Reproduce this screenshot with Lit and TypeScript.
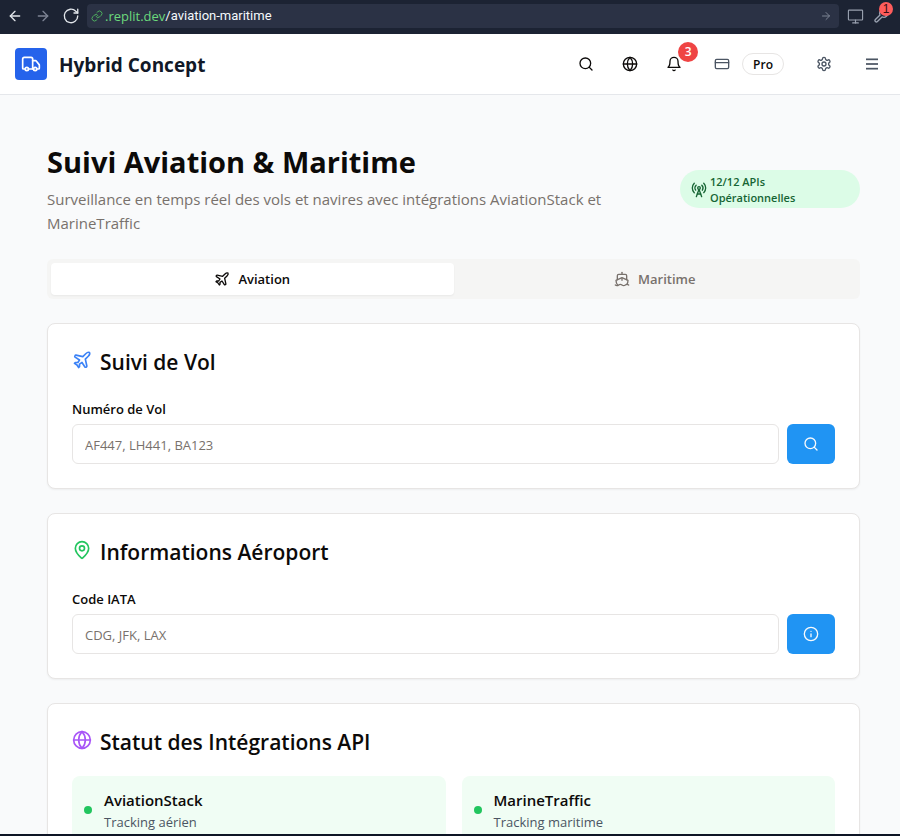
import { LitElement, html, css, svg, type SVGTemplateResult } from "lit";
import { customElement, property, state } from "lit/decorators.js";
import { classMap } from "lit/directives/class-map.js";

const ICONS: Record<string, SVGTemplateResult> = {
  back: svg`<path d="m12 19-7-7 7-7"/><path d="M19 12H5"/>`,
  forward: svg`<path d="M5 12h14"/><path d="m12 5 7 7-7 7"/>`,
  reload: svg`<path d="M21 12a9 9 0 1 1-2.6-6.4L21 8"/><path d="M21 3v5h-5"/>`,
  link: svg`<path d="M10 13a5 5 0 0 0 7.54.54l3-3a5 5 0 0 0-7.07-7.07l-1.72 1.71"/><path d="M14 11a5 5 0 0 0-7.54-.54l-3 3a5 5 0 0 0 7.07 7.07l1.71-1.71"/>`,
  monitor: svg`<rect width="20" height="14" x="2" y="3" rx="1"/><path d="M8 21h8"/><path d="M12 17v4"/>`,
  wrench: svg`<path d="M14.7 6.3a1 1 0 0 0 0 1.4l1.6 1.6a1 1 0 0 0 1.4 0l3.77-3.77a6 6 0 0 1-7.94 7.94l-6.91 6.91a2.12 2.12 0 0 1-3-3l6.91-6.91a6 6 0 0 1 7.94-7.94l-3.76 3.76z"/>`,
  truck: svg`<path d="M14 18V6a2 2 0 0 0-2-2H4a2 2 0 0 0-2 2v11a1 1 0 0 0 1 1h2"/><path d="M15 18H9"/><path d="M19 18h2a1 1 0 0 0 1-1v-3.65a1 1 0 0 0-.22-.624l-3.48-4.35A1 1 0 0 0 17.52 8H14"/><circle cx="17" cy="18" r="2"/><circle cx="7" cy="18" r="2"/>`,
  search: svg`<circle cx="11" cy="11" r="8"/><path d="m21 21-4.3-4.3"/>`,
  globe: svg`<circle cx="12" cy="12" r="10"/><path d="M12 2a14.5 14.5 0 0 0 0 20 14.5 14.5 0 0 0 0-20"/><path d="M2 12h20"/>`,
  bell: svg`<path d="M6 8a6 6 0 0 1 12 0c0 7 3 9 3 9H3s3-2 3-9"/><path d="M10.3 21a1.94 1.94 0 0 0 3.4 0"/>`,
  card: svg`<rect width="20" height="14" x="2" y="5" rx="2"/><path d="M2 10h20"/>`,
  settings: svg`<path d="M12.22 2h-.44a2 2 0 0 0-2 2v.18a2 2 0 0 1-1 1.73l-.43.25a2 2 0 0 1-2 0l-.15-.08a2 2 0 0 0-2.73.73l-.22.38a2 2 0 0 0 .73 2.73l.15.1a2 2 0 0 1 1 1.72v.51a2 2 0 0 1-1 1.74l-.15.09a2 2 0 0 0-.73 2.73l.22.38a2 2 0 0 0 2.73.73l.15-.08a2 2 0 0 1 2 0l.43.25a2 2 0 0 1 1 1.73V20a2 2 0 0 0 2 2h.44a2 2 0 0 0 2-2v-.18a2 2 0 0 1 1-1.73l.43-.25a2 2 0 0 1 2 0l.15.08a2 2 0 0 0 2.73-.73l.22-.39a2 2 0 0 0-.73-2.73l-.15-.08a2 2 0 0 1-1-1.74v-.5a2 2 0 0 1 1-1.74l.15-.09a2 2 0 0 0 .73-2.73l-.22-.38a2 2 0 0 0-2.73-.73l-.15.08a2 2 0 0 1-2 0l-.43-.25a2 2 0 0 1-1-1.73V4a2 2 0 0 0-2-2z"/><circle cx="12" cy="12" r="3"/>`,
  menu: svg`<g stroke-width="2.6" stroke-linecap="butt"><path d="M3 5h18"/><path d="M3 12h18"/><path d="M3 19h18"/></g>`,
  tower: svg`<path d="M4.9 16.1C1 12.2 1 5.8 4.9 1.9"/><path d="M7.8 4.7a6.14 6.14 0 0 0-.8 7.5"/><circle cx="12" cy="9" r="2"/><path d="M16.2 4.8c2 2 2.26 5.11.8 7.47"/><path d="M19.1 1.9a9.96 9.96 0 0 1 0 14.1"/><path d="M9.5 18h5"/><path d="m8 22 4-11 4 11"/>`,
  plane: svg`<path d="M17.8 19.2 16 11l3.5-3.5C21 6 21.5 4 21 3c-1-.5-3 0-4.5 1.5L13 8 4.8 6.2c-.5-.1-.9.1-1.1.5l-.3.5c-.2.5-.1 1 .3 1.3L9 12l-2 3H4l-1 1 3 2 2 3 1-1v-3l3-2 3.5 5.3c.3.4.8.5 1.3.3l.5-.2c.4-.3.6-.7.5-1.2z"/>`,
  ship: svg`<path d="M12 10.189V14"/><path d="M12 2v3"/><path d="M19 13V7a2 2 0 0 0-2-2H7a2 2 0 0 0-2 2v6"/><path d="M19.38 20A11.6 11.6 0 0 0 21 14l-8.188-3.639a2 2 0 0 0-1.624 0L3 14a11.6 11.6 0 0 0 2.81 7.76"/><path d="M2 21c.6.5 1.2 1 2.5 1 2.5 0 2.5-2 5-2 1.3 0 1.9.5 2.5 1s1.2 1 2.5 1c2.5 0 2.5-2 5-2 1.3 0 1.9.5 2.5 1"/>`,
  pin: svg`<path d="M20 10c0 4.993-5.539 10.193-7.399 11.799a1 1 0 0 1-1.202 0C9.539 20.193 4 14.993 4 10a8 8 0 0 1 16 0"/><circle cx="12" cy="10" r="3"/>`,
  info: svg`<circle cx="12" cy="12" r="10"/><path d="M12 16v-4"/><path d="M12 8h.01"/>`,
};

@customElement("ui-icon")
class UiIcon extends LitElement {
  @property() name = "";
  @property({ type: Number }) size = 16;
  @property({ type: Number }) weight = 2;

  static styles = css`
    :host { display: block; flex: none; }
    .glyph { display: block; }
  `;

  render() {
    return html`<svg class="glyph" width=${this.size} height=${this.size} viewBox="0 0 24 24"
      fill="none" stroke="currentColor" stroke-width=${this.weight}
      stroke-linecap="round" stroke-linejoin="round" aria-hidden="true">${ICONS[this.name]}</svg>`;
  }
}

@customElement("browser-bar")
class BrowserBar extends LitElement {
  static styles = css`
    :host {
      display: flex; align-items: center; box-sizing: border-box; height: 34px;
      padding: 0 6px 2px 1px; background: #1c2333; color: #f5f9fc;
      font-family: Roboto, "Open Sans", sans-serif; font-size: 13px;
    }
    .tool {
      position: relative; display: grid; place-items: center; flex: none;
      width: 28px; height: 28px; padding: 0; border: 0; background: none; color: #e1e5ea;
    }
    .tool.narrow { width: 26px; color: #99a1b0; }
    .tool.dim { color: #7d8494; }
    .address {
      display: flex; align-items: center; flex: 1; min-width: 0; height: 24px;
      margin: 0 3px 0 2px; padding: 0 7px 0 4px; border-radius: 4px; background: #2b3245;
    }
    .chain { color: #4fae5f; margin-right: 2px; }
    .origin { color: #6bd97c; font-family: "Open Sans", sans-serif; }
    .path {
      flex: 1; min-width: 0; padding: 0; border: 0; outline: 0; background: none;
      color: inherit; font: inherit;
    }
    .tool.go { width: 12px; height: 24px; }
    .count {
      position: absolute; top: 0; right: 1px; width: 14px; height: 14px; border-radius: 50%;
      background: #ff5c5c; color: #3b0d12; font-size: 12px; line-height: 14px; text-align: center;
    }
  `;

  render() {
    return html`
      <button class="tool" aria-label="Page précédente"><ui-icon name="back" size="16"></ui-icon></button>
      <button class="tool dim" aria-label="Page suivante"><ui-icon name="forward" size="16"></ui-icon></button>
      <button class="tool" aria-label="Actualiser"><ui-icon name="reload" size="18" weight="1.8"></ui-icon></button>
      <div class="address">
        <ui-icon class="chain" name="link" size="12"></ui-icon>
        <label class="origin" for="path">.replit.dev</label>
        <input class="path" id="path" value="/aviation-maritime" />
        <button class="tool dim go" aria-label="Ouvrir"><ui-icon name="forward" size="12"></ui-icon></button>
      </div>
      <button class="tool narrow" aria-label="Affichage"><ui-icon name="monitor" size="17" weight="1.6"></ui-icon></button>
      <button class="tool narrow" aria-label="Outils">
        <ui-icon name="wrench" size="16"></ui-icon><span class="count">1</span>
      </button>
    `;
  }
}

@customElement("app-header")
class AppHeader extends LitElement {
  static styles = css`
    :host {
      display: flex; align-items: center; justify-content: space-between; height: 60px;
      padding: 0 10px 0 15px; border-bottom: 1px solid #e5e7eb; background: #fff; color: #0c0a09;
    }
    .brand { display: flex; align-items: center; gap: 12px; color: #111827; text-decoration: none; }
    .logo {
      display: grid; place-items: center; width: 32px; height: 32px;
      border-radius: 4px; background: #2563eb; color: #fff;
    }
    .name { padding-top: 2px; font-size: 19px; line-height: 28px; font-weight: 700; }
    .nav, .group { display: flex; align-items: center; }
    .nav { gap: 12px; }
    .group { gap: 8px; }
    .tool {
      position: relative; display: grid; place-items: center; width: 36px; height: 36px;
      padding: 0; border: 0; background: none; color: inherit; font: inherit;
    }
    .muted { color: #4b5563; }
    .count {
      position: absolute; top: -4px; right: -6px; width: 20px; height: 20px; border-radius: 50%;
      background: #ef4444; color: #fff; font-size: 12px; line-height: 20px; font-weight: 600;
    }
    .plan { display: flex; align-items: center; gap: 12px; padding: 0 10px; color: #4b5563; text-decoration: none; }
    .tier {
      padding: 1px 10px; border: 1px solid #e7e5e4; border-radius: 11px;
      color: #0c0a09; font-size: 12px; line-height: 18px; font-weight: 600;
    }
    .tier { padding: 2px 10px 0; }
  `;

  render() {
    return html`
      <a class="brand" href="#">
        <span class="logo"><ui-icon name="truck" size="20"></ui-icon></span>
        <span class="name">Hybrid Concept</span>
      </a>
      <nav class="nav">
        <div class="group">
          <button class="tool" aria-label="Rechercher"><ui-icon name="search"></ui-icon></button>
          <button class="tool" aria-label="Langue"><ui-icon name="globe"></ui-icon></button>
          <button class="tool" aria-label="Notifications">
            <ui-icon name="bell"></ui-icon><span class="count">3</span>
          </button>
        </div>
        <a class="plan" href="#"><ui-icon name="card"></ui-icon><span class="tier">Pro</span></a>
        <button class="tool muted" aria-label="Paramètres"><ui-icon name="settings"></ui-icon></button>
        <button class="tool muted" aria-label="Menu"><ui-icon name="menu"></ui-icon></button>
      </nav>
    `;
  }
}

@customElement("lookup-card")
class LookupCard extends LitElement {
  @property() heading = "";
  @property() icon = "";
  @property() tone = "";
  @property() label = "";
  @property() hint = "";
  @property() action = "";
  @property({ attribute: "action-label" }) actionLabel = "";

  static styles = css`
    :host {
      display: block; padding: 24px; border: 1px solid #e7e5e4; border-radius: 8px;
      background: #fff; box-shadow: 0 1px 2px rgb(0 0 0 / 5%);
    }
    .title {
      display: flex; align-items: center; gap: 8px; margin: 0 0 24px;
      font-size: 21px; line-height: 24px; font-weight: 600;
    }
    .caption { padding-top: 2px; margin-bottom: -2px; }
    .blue { color: #3b82f6; }
    .green { color: #22c55e; }
    .purple { color: #a855f7; }
    .form { display: flex; align-items: flex-end; gap: 8px; }
    .field { flex: 1; min-width: 0; }
    .label { display: block; padding-top: 2px; margin-bottom: 4px; font-size: 13px; line-height: 22px; font-weight: 600; }
    .input {
      display: block; box-sizing: border-box; width: 100%; height: 40px; padding: 2px 12px 0;
      border: 1px solid #e7e5e4; border-radius: 6px; background: #fff; color: inherit;
      font: inherit; font-size: 13px;
    }
    .input::placeholder { color: #78716c; opacity: 1; }
    .submit {
      display: grid; place-items: center; width: 48px; height: 40px; padding: 0;
      border: 0; border-radius: 6px; background: #2094f3; color: #f8fafc;
    }
  `;

  render() {
    return html`
      <h2 class="title"><ui-icon class=${this.tone} name=${this.icon} size="20"></ui-icon><span class="caption">${this.heading}</span></h2>
      ${this.label
        ? html`<form class="form" @submit=${(e: Event) => e.preventDefault()}>
            <div class="field">
              <label class="label" for="query">${this.label}</label>
              <input class="input" id="query" placeholder=${this.hint} />
            </div>
            <button class="submit" aria-label=${this.actionLabel}><ui-icon name=${this.action}></ui-icon></button>
          </form>`
        : html`<slot></slot>`}
    `;
  }
}

@customElement("app-root")
class AppRoot extends LitElement {
  @state() private tab = "Aviation";

  private tabs = [
    { name: "Aviation", icon: "plane" },
    { name: "Maritime", icon: "ship" },
  ];

  private services = [
    { name: "AviationStack", role: "Tracking aérien" },
    { name: "MarineTraffic", role: "Tracking maritime" },
  ];

  static styles = css`
    :host {
      display: flex; flex-direction: column; box-sizing: border-box; height: 100vh;
      border-bottom: 2px solid #0e1525; background: #f9fafb; color: #0c0a09;
      font-family: "Open Sans", "Noto Sans", sans-serif; font-size: 15px; line-height: 24px;
    }
    .bar, .header { flex: none; }
    .page {
      flex: 1; min-height: 0; overflow-y: auto; scrollbar-width: none;
      padding: 48px 40px 24px 47px;
    }
    .intro { display: flex; align-items: center; justify-content: space-between; gap: 24px; }
    .headline { margin: 0 0 8px; padding-top: 2px; font-size: 29px; line-height: 34px; font-weight: 700; }
    .lead { margin: 0; color: #78716c; }
    .status {
      display: flex; align-items: center; gap: 3px; flex: none; box-sizing: border-box; width: 180px;
      padding: 4px 11px 2px; border-radius: 19px; background: #dcfce7; color: #166534;
      font-size: 11px; line-height: 16px; font-weight: 600;
    }
    .tabs {
      display: grid; grid-template-columns: 1fr 1fr; margin: 24px 0; padding: 4px;
      border-radius: 6px; background: #f5f5f4;
    }
    .tab {
      display: flex; align-items: center; justify-content: center; gap: 8px; height: 32px;
      padding: 0; border: 0; border-radius: 4px; background: none; color: #78716c;
      font: inherit; font-size: 13px; font-weight: 600;
    }
    .tab.active { background: #fff; color: #0c0a09; box-shadow: 0 1px 2px rgb(0 0 0 / 5%); }
    .cards { display: grid; gap: 24px; }
    .services { display: grid; grid-template-columns: 1fr 1fr; gap: 16px; }
    .service {
      display: flex; align-items: center; gap: 12px; padding: 12px;
      border-radius: 8px; background: #f0fdf4;
    }
    .dot { flex: none; width: 8px; height: 8px; border-radius: 50%; background: #22c55e; }
    .service-name { font-weight: 600; font-size: 15px; }
    .service-role { color: #4b5563; font-size: 13px; line-height: 20px; }
  `;

  render() {
    return html`
      <browser-bar class="bar"></browser-bar>
      <app-header class="header"></app-header>
      <main class="page">
        <div class="intro">
          <div>
            <h1 class="headline">Suivi Aviation &amp; Maritime</h1>
            <p class="lead">Surveillance en temps réel des vols et navires avec intégrations AviationStack et MarineTraffic</p>
          </div>
          <div class="status"><ui-icon name="tower"></ui-icon><span>12/12 APIs Opérationnelles</span></div>
        </div>
        <div class="tabs" role="tablist">
          ${this.tabs.map((t) => html`
            <button role="tab" aria-selected=${t.name === this.tab}
              class=${classMap({ tab: true, active: t.name === this.tab })}
              @click=${() => (this.tab = t.name)}>
              <ui-icon name=${t.icon}></ui-icon>${t.name}
            </button>`)}
        </div>
        <div class="cards">
          <lookup-card heading="Suivi de Vol" icon="plane" tone="blue" label="Numéro de Vol"
            hint="AF447, LH441, BA123" action="search" action-label="Rechercher le vol"></lookup-card>
          <lookup-card heading="Informations Aéroport" icon="pin" tone="green" label="Code IATA"
            hint="CDG, JFK, LAX" action="info" action-label="Informations"></lookup-card>
          <lookup-card heading="Statut des Intégrations API" icon="globe" tone="purple">
            <div class="services">
              ${this.services.map((s) => html`
                <div class="service">
                  <span class="dot"></span>
                  <div>
                    <div class="service-name">${s.name}</div>
                    <div class="service-role">${s.role}</div>
                  </div>
                </div>`)}
            </div>
          </lookup-card>
        </div>
      </main>
    `;
  }
}
